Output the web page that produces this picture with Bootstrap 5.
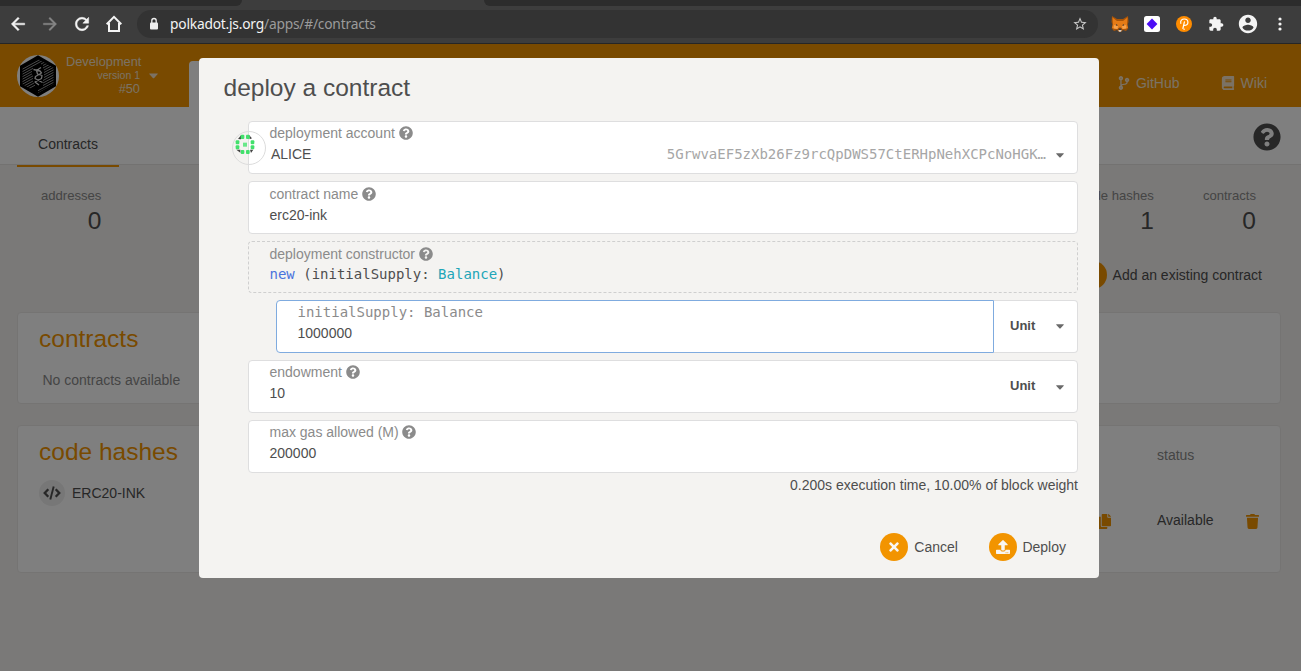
<!DOCTYPE html>
<html lang="en">
<head>
<meta charset="utf-8">
<title>Polkadot/Substrate Portal</title>
<link href="https://cdn.jsdelivr.net/npm/bootstrap@5.3.0/dist/css/bootstrap.min.css" rel="stylesheet">
<style>
  :root { --dot-orange: #f29400; --dot-text: #4e4e4e; }
  body { width: 1301px; height: 671px; font: 14px/20px "Liberation Sans", Arial, sans-serif; color: var(--dot-text); background: #f4f2f0; }
  svg { display: block; flex: none; }
  .mono { font-family: "DejaVu Sans Mono", monospace; }

  /* browser window */
  .tabstrip { height: 6px; background: #3d3d3d; }
  .tabstrip div { background: #2c2c2c; height: 6px; }
  .tabs-before { width: 242px; border-bottom-right-radius: 6px; }
  .tabs-after { width: 817px; border-bottom-left-radius: 6px; }
  .toolbar { height: 38px; padding: 0 5px 1px 2px; background: #3d3d3d; border-bottom: 1px solid #262626; color: #f4f4f4; }
  .tool { width: 32px; height: 36px; display: flex; align-items: center; justify-content: center; }
  .omnibox { height: 28px; margin: 0 6px 0 7px; padding: 0 10px 0 11px; border-radius: 14px; background: #333; font: 13.8px/28px "Noto Sans", sans-serif; letter-spacing: -.22px; }
  .omnibox .path { color: #9b9b9b; }

  /* app behind the dialog */
  .app-header { height: 63px; background: var(--dot-orange); color: #f6e4cb; }
  .chain { width: 189px; padding-left: 17px; }
  .chain-info { width: 74px; margin-left: 7px; font-size: 12.8px; line-height: 13px; white-space: nowrap; margin-top: -1px; }
  .chain-info .ver { font-size: 10.5px; line-height: 14px; }
  .menu-tab { width: 240px; height: 46px; margin-top: 17px; background: #fff; border-radius: 4px 0 0 0; }
  .header-links { padding: 15px 34px 0 0; gap: 41px; }
  .subtabs { height: 58px; background: #fff; border-bottom: 1px solid #e6e4e2; padding: 0 20px 0 17px; }
  .subtab { width: 102px; height: 60px; padding: 27px 0 0 0; border-bottom: 2px solid var(--dot-orange); text-align: center; }
  .stats { height: 67px; padding: 21px 45px 0 41px; }
  .stat { text-align: right; font-size: 13.1px; line-height: 20px; color: #8a8a8a; }
  .stat b { display: block; font-weight: 400; font-size: 24.5px; line-height: 30px; color: var(--dot-text); }
  .page-actions { height: 28px; margin-top: 29px; padding-right: 39px; }
  .round-btn { width: 28px; height: 28px; border-radius: 50%; background: var(--dot-orange); color: #f8f6f3; display: flex; align-items: center; justify-content: center; flex: none; }
  .panel { margin: 0 20px 21px 17px; background: #fff; border: 1px solid #ebe9e7; border-radius: 4px; }
  .panel h1 { font-size: 24.5px; line-height: 30px; color: var(--dot-orange); margin: 0; }
  .panel-contracts { height: 92px; padding: 11px 21px 0; }
  .panel-contracts p { margin: 16px 0 0 3.5px; color: #8a8a8a; }
  .panel-codes { height: 148px; padding: 11px 21px 0; }
  .code-icon { width: 26px; height: 26px; border-radius: 50%; background: #eee; display: flex; align-items: center; justify-content: center; }

  /* dialog */
  .shade { inset: 0; background: rgba(0,0,0,.5); }
  .deploy-dialog { left: 199px; top: 14px; width: 900px; height: 520px; background: #f4f3f1; border: 0; border-radius: 4px; color: var(--dot-text); padding: 15px 21px 0 24px; }
  .deploy-dialog h2 { font-size: 24.5px; line-height: 30px; margin: 0 0 18px .5px; }
  .fields { padding-left: 25px; }
  .field { height: 53px; margin-bottom: 7px; padding: 1px 13px 0 20.5px; background: #fff; border: 1px solid #dededf; border-radius: 4px; position: relative; line-height: 21px; }
  .field-label { color: #8b8b8b; gap: 4px; height: 21px; }
  .field-label svg { margin-bottom: 1px; }
  .field.lower { padding-top: 2px; }
  .field.call { height: 52px; background: transparent; border-style: dashed; border-color: #cfcfcf; padding-top: 2px; line-height: 20px; }
  .field.call .field-label { height: 20px; }
  .field.focused { border-radius: 4px 0 0 4px; border-color: #7fabdf; }
  .unit { font-weight: 700; font-size: 13px; width: 84px; padding: 0 13px 0 16px; }
  .unit-box { height: 53px; background: #fff; border: 1px solid #dededf; border-left: 0; border-radius: 0 4px 4px 0; padding-bottom: 2px; }
  .drop-caret { color: #6a6a6a; margin-top: 2px; }
  .account-icon { left: -17px; top: 9px; width: 34px; height: 34px; border: 1px solid #dcdcdc; border-radius: 50%; padding: 2px; }
  .dialog-actions { margin-top: 38px; padding-right: 12px; gap: 31px; }
</style>
</head>
<body class="d-flex flex-column overflow-hidden m-0">
<svg width="0" height="0" class="position-absolute">
  <symbol id="i-help" viewBox="0 0 512 512"><path fill="currentColor" d="M504 256c0 136.997-111.043 248-248 248S8 392.997 8 256C8 119.083 119.043 8 256 8s248 111.083 248 248zM262.655 90c-54.497 0-89.255 22.957-116.549 63.758-3.536 5.286-2.353 12.415 2.715 16.258l34.699 26.310c5.205 3.947 12.621 3.008 16.665-2.122 17.864-22.658 30.113-35.797 57.303-35.797 20.429 0 45.698 13.148 45.698 32.958 0 14.976-12.363 22.667-32.534 33.976C247.128 238.528 216 254.941 216 296v4c0 6.627 5.373 12 12 12h56c6.627 0 12-5.373 12-12v-1.333c0-28.462 83.186-29.647 83.186-106.667 0-58.002-60.165-102-116.531-102zM256 338c-25.365 0-46 20.635-46 46 0 25.364 20.635 46 46 46s46-20.636 46-46c0-25.365-20.635-46-46-46z"/></symbol>
  <symbol id="i-caret" viewBox="0 0 8 5"><path fill="currentColor" d="M.3.3h7.400Q8 .6 7.600 1L4.400 4.400Q4 4.800 3.600 4.400L.4 1Q0 .6.3.3z"/></symbol>
  <symbol id="i-back" viewBox="0 0 24 24"><path fill="currentColor" d="M20 11H7.830l5.590-5.590L12 4l-8 8 8 8 1.410-1.410L7.830 13H20v-2z"/></symbol>
</svg>

<div class="tabstrip d-flex justify-content-between flex-shrink-0"><div class="tabs-before"></div><div class="tabs-after"></div></div>
<div class="toolbar d-flex align-items-center flex-shrink-0">
  <div class="tool"><svg width="20" height="20" stroke="currentColor" stroke-width=".6"><use href="#i-back"/></svg></div>
  <div class="tool" style="color:#868686"><svg width="20" height="20" transform="scale(-1 1)" stroke="currentColor" stroke-width=".4"><use href="#i-back"/></svg></div>
  <div class="tool"><svg width="20" height="20" viewBox="0 0 24 24"><path fill="currentColor" stroke="currentColor" stroke-width=".6" d="M17.650 6.350C16.200 4.900 14.210 4 12 4c-4.420 0-7.990 3.580-7.990 8s3.570 8 7.990 8c3.730 0 6.840-2.550 7.730-6h-2.080c-.82 2.330-3.040 4-5.650 4-3.310 0-6-2.690-6-6s2.690-6 6-6c1.660 0 3.140.69 4.220 1.780L13 11h7V4l-2.350 2.350z"/></svg></div>
  <div class="tool"><svg width="18" height="18" viewBox="0 0 18 18" fill="none" stroke="currentColor" stroke-width="2"><path d="M4 8v8h10V8M1.700 9.200L9 1.900l7.300 7.300"/></svg></div>
  <div class="omnibox d-flex align-items-center flex-grow-1">
    <svg width="12" height="14" viewBox="0 0 12 14" class="me-2"><rect x="2" y="5.500" width="8" height="7" rx="1" fill="#eee"/><path d="M3.800 6V3.700a2.200 2.200 0 0 1 4.400 0V6" fill="none" stroke="#eee" stroke-width="1.300"/></svg>
    <span class="flex-grow-1" style="margin-left:2px"><span>polkadot.js.org</span><span class="path">/apps/#/contracts</span></span>
    <svg width="16" height="16" viewBox="0 0 24 24"><path fill="#c8c8c8" d="M22 9.240l-7.190-.62L12 2 9.190 8.630 2 9.240l5.460 4.730L5.820 21 12 17.270 18.180 21l-1.630-7.030L22 9.240zM12 15.400l-3.760 2.270 1-4.280-3.320-2.880 4.380-.38L12 6.100l1.710 4.040 4.380.38-3.320 2.880 1 4.280L12 15.400z"/></svg>
  </div>
  <div class="tool"><svg width="18" height="16" viewBox="0 0 18 16"><path fill="#a85408" d="M1 0l5 3h6l5-3 .5 6-1 3 .8 3.500-2.300 2.500-3-1-2 2H8l-2-2-3 1L.7 12.500 1.500 9 .5 6z"/><path fill="#e57b16" d="M1.500 1.500L6 5h6l4.500-3.500L16 8l1 4-5.500 1L9 11l-2.500 2L1 12l1-4z"/><path fill="#f6a14a" d="M3 9l4 1-.5 3-4-.5zM15 9l-4 1 .5 3 4-.5z"/><path fill="#3b3737" d="M5 8l2 1.200-1.800.5zM13 8l-2 1.200 1.800.5zM7.500 12.500h3l-.5 2H8z"/><path fill="#d8cfc6" d="M7.300 14h3.400l-.7 1.800H8z"/></svg></div>
  <div class="tool"><svg width="16" height="16"><rect width="16" height="16" rx="2.500" fill="#fff"/><path d="M8 2.600L13.400 8 8 13.400 2.600 8z" fill="#4b0cf5"/></svg></div>
  <div class="tool"><svg width="16" height="16" viewBox="0 0 16 16"><circle cx="8" cy="8" r="8" fill="#ff8c00"/><path d="M4.800 7.400C4 4.500 6 3 8.300 3c2.300 0 3.600 1.500 3.600 3.200 0 2-1.500 3.200-3.800 3.200M8.400 5.800L6.900 12.500" fill="none" stroke="#fff" stroke-width="1.200" stroke-linecap="round"/><circle cx="8.100" cy="13.300" r=".7" fill="#fff"/></svg></div>
  <div class="tool"><svg width="16" height="16" viewBox="0 0 24 24"><path fill="currentColor" d="M20.500 11H19V7c0-1.100-.9-2-2-2h-4V3.500C13 2.120 11.880 1 10.500 1S8 2.120 8 3.500V5H4c-1.100 0-1.990.9-1.990 2v3.800H3.500c1.490 0 2.700 1.210 2.700 2.700s-1.210 2.700-2.700 2.700H2V20c0 1.100.9 2 2 2h3.800v-1.500c0-1.490 1.210-2.700 2.700-2.700 1.490 0 2.700 1.210 2.700 2.700V22H17c1.100 0 2-.9 2-2v-4h1.500c1.380 0 2.500-1.120 2.500-2.500S21.880 11 20.500 11z"/></svg></div>
  <div class="tool"><svg width="22" height="22" viewBox="0 0 24 24"><path fill="currentColor" d="M12 2C6.480 2 2 6.480 2 12s4.480 10 10 10 10-4.480 10-10S17.520 2 12 2zm0 3c1.660 0 3 1.340 3 3s-1.340 3-3 3-3-1.340-3-3 1.340-3 3-3zm0 14.200c-2.500 0-4.710-1.280-6-3.220.03-1.990 4-3.080 6-3.080 1.990 0 5.970 1.090 6 3.080-1.290 1.940-3.500 3.220-6 3.220z"/></svg></div>
  <div class="tool"><svg width="4" height="14" viewBox="0 0 4 14" fill="currentColor"><circle cx="2" cy="2" r="1.600"/><circle cx="2" cy="7" r="1.600"/><circle cx="2" cy="12" r="1.600"/></svg></div>
</div>

<main class="position-relative flex-grow-1">
  <header class="app-header d-flex">
    <div class="chain d-flex align-items-center">
      <svg width="42" height="42" viewBox="0 0 42 42">
        <defs><clipPath id="hex"><path d="M21 4l15.500 8.700v16.600L21 38 5.500 29.300V12.700z"/></clipPath></defs>
        <circle cx="21" cy="21" r="21" fill="#fff"/><path d="M21 .3l18 10.400v20.600L21 41.700 3 31.300V10.700z" fill="#000"/>
        <g clip-path="url(#hex)" stroke="#bbb" stroke-width=".8"><path d="M3 13L21 3M3 15.500L24 4M3 18L28 4.200M3 20.500L16 13.400M3 23L15 16.400M3 25.500L15 18.900M3 28L16 20.900M3 30.500L16 23.400M6 31.500L16 26M8 33L17 28M11 34L18 30.200M24 9L31 5.200M26 10.500L34 6.200M26 13L38 6.500M27 15L38 9M27 17.500L38 11.500M27 20L38 14M27 22.500L38 16.500M26 25.500L38 19M26 28L38 21.500M26 30.500L38 24M21 35.700L38 26.500M21 38.200L38 29"/></g>
        <path d="M16.500 14.500l6.500 1.500 1.500 2-6 3.500-.5 2 7.500 4M24 12.500l-4.500 3 1 3.500 4.500 1.500-.5 3-6.500 3.500 4 3" fill="none" stroke="#e4e4e4" stroke-width="1.300" stroke-linejoin="round"/>
      </svg>
      <div class="chain-info text-end"><div>Development</div><div class="ver">version 1</div><div>#50</div></div>
      <svg width="9" height="6" style="margin:1px 0 0 9px"><use href="#i-caret"/></svg>
    </div>
    <div class="menu-tab"></div>
    <nav class="header-links d-flex ms-auto align-items-center">
      <span class="d-flex align-items-center" style="gap:6px"><svg width="12" height="14" viewBox="0 0 384 512"><path fill="currentColor" d="M384 144c0-44.200-35.800-80-80-80s-80 35.800-80 80c0 36.400 24.300 67.100 57.500 76.800-.6 16.100-4.200 28.500-11 36.900-15.400 19.200-49.300 22.400-85.200 25.700-28.200 2.600-57.400 5.400-81.300 16.900v-144c32.500-10.200 56-40.500 56-76.300 0-44.200-35.800-80-80-80S0 35.800 0 80c0 35.800 23.500 66.100 56 76.300v199.300C23.500 365.900 0 396.200 0 432c0 44.200 35.800 80 80 80s80-35.800 80-80c0-34-21.200-63.100-51.200-74.600 3.100-5.200 7.800-9.800 14.900-13.400 16.200-8.200 40.400-10.400 66.100-12.800 42.200-3.900 90-8.400 118.200-43.400 14-17.400 21.100-39.800 21.600-67.900 31.600-10.800 54.400-40.700 54.400-75.900zM80 64c8.800 0 16 7.200 16 16s-7.200 16-16 16-16-7.200-16-16 7.200-16 16-16zm0 384c-8.800 0-16-7.200-16-16s7.200-16 16-16 16 7.200 16 16-7.200 16-16 16zm224-320c8.800 0 16 7.200 16 16s-7.200 16-16 16-16-7.200-16-16 7.200-16 16-16z"/></svg>GitHub</span>
      <span class="d-flex align-items-center" style="gap:6px"><svg width="14" height="14" viewBox="0 0 448 512"><path fill="currentColor" d="M448 360V24c0-13.300-10.700-24-24-24H96C43 0 0 43 0 96v320c0 53 43 96 96 96h328c13.300 0 24-10.700 24-24v-16c0-7.500-3.500-14.300-8.900-18.700-4.200-15.400-4.200-59.300 0-74.700 5.400-4.300 8.900-11.100 8.900-18.600zM128 134c0-3.300 2.700-6 6-6h212c3.300 0 6 2.700 6 6v20c0 3.300-2.700 6-6 6H134c-3.300 0-6-2.700-6-6v-20zm0 64c0-3.300 2.700-6 6-6h212c3.300 0 6 2.700 6 6v20c0 3.300-2.700 6-6 6H134c-3.300 0-6-2.700-6-6v-20zm253.400 250H96c-17.700 0-32-14.300-32-32 0-17.600 14.400-32 32-32h285.400c-1.900 17.100-1.900 46.900 0 64z"/></svg>Wiki</span>
    </nav>
  </header>
  <div class="subtabs d-flex justify-content-between align-items-start">
    <div class="subtab">Contracts</div>
    <svg width="28" height="28" style="margin-top:16px"><use href="#i-help"/></svg>
  </div>
  <section class="stats d-flex">
    <div class="stat">addresses<b>0</b></div>
    <div class="stat ms-auto">code hashes<b>1</b></div>
    <div class="stat" style="margin-left:49px">contracts<b>0</b></div>
  </section>
  <div class="page-actions d-flex justify-content-end align-items-center"><span class="round-btn me-2"></span><span style="margin-left:-2px">Add an existing contract</span></div>
  <section class="panel panel-contracts" style="margin-top:23px">
    <h1>contracts</h1>
    <p>No contracts available</p>
  </section>
  <section class="panel panel-codes d-flex">
    <div class="flex-grow-1">
      <h1>code hashes</h1>
      <div class="d-flex align-items-center" style="margin-top:13px">
        <span class="code-icon"><svg width="18" height="14" viewBox="0 0 18 14" fill="none" stroke="currentColor" stroke-width="2.300"><path d="M5.300 3.200L1.700 7l3.600 3.800M12.700 3.200L16.300 7l-3.600 3.800"/><path d="M10.700.5L7.300 13.500" stroke-width="1.900"/></svg></span>
        <span style="margin-left:7px">ERC20-INK</span>
      </div>
    </div>
    <div class="d-flex align-items-center" style="height:168px;width:59px;color:var(--dot-orange)"><svg width="13" height="15" viewBox="0 0 448 512"><path fill="currentColor" d="M320 448v40c0 13.255-10.745 24-24 24H24c-13.255 0-24-10.745-24-24V120c0-13.255 10.745-24 24-24h72v296c0 30.879 25.121 56 56 56h168zm0-344V0H152c-13.255 0-24 10.745-24 24v368c0 13.255 10.745 24 24 24h272c13.255 0 24-10.745 24-24V128H344c-13.200 0-24-10.800-24-24zm120.971-31.029L375.029 7.029A24 24 0 0 0 358.059 0H352v96h96v-6.059a24 24 0 0 0-7.029-16.970z"/></svg></div>
    <div style="width:89px;padding-top:8px"><div style="color:#8a8a8a">status</div><div style="margin-top:45px">Available</div></div>
    <div class="d-flex align-items-center" style="height:168px;width:13px;color:var(--dot-orange)"><svg width="13" height="15" viewBox="0 0 448 512"><path fill="currentColor" d="M432 32H312l-9.400-18.700A24 24 0 0 0 281.100 0H166.800a23.720 23.720 0 0 0-21.400 13.300L136 32H16A16 16 0 0 0 0 48v32a16 16 0 0 0 16 16h416a16 16 0 0 0 16-16V48a16 16 0 0 0-16-16zM53.200 467a48 48 0 0 0 47.900 45h245.800a48 48 0 0 0 47.900-45L416 128H32z"/></svg></div>
  </section>

  <div class="shade position-absolute"></div>

  <div class="deploy-dialog modal-content position-absolute" role="dialog">
    <h2>deploy a contract</h2>
    <div class="fields">
      <div class="field">
        <div class="account-icon position-absolute">
          <svg width="20" height="20" viewBox="0 0 60 60"><path fill="#444" d="M9 15L18 4v12zM42 3l9 10-7 3zM4 47h12v9zM45 47h10l-7 10z"/><g fill="#42e06c"><rect x="17" y="2" width="11" height="13" rx="3"/><rect x="33" y="2" width="11" height="13" rx="3"/><rect x="17" y="48" width="11" height="12" rx="3"/><rect x="33" y="48" width="11" height="12" rx="3"/><rect x="2" y="19" width="11" height="12" rx="3"/><rect x="2" y="34" width="11" height="12" rx="3"/><rect x="47" y="19" width="11" height="12" rx="3"/><rect x="47" y="34" width="11" height="12" rx="3"/></g><rect x="24" y="26" width="12" height="12" fill="#68e88a"/></svg>
        </div>
        <div class="field-label d-flex align-items-center">deployment account<svg width="14" height="14"><use href="#i-help"/></svg></div>
        <div class="d-flex align-items-center"><span style="margin-left:1.500px">ALICE</span><span class="mono ms-auto" style="color:#a6a6a6;margin-top:-1px">5GrwvaEF5zXb26Fz9rcQpDWS57CtERHpNehXCPcNoHGK…</span><svg width="8" height="5" class="drop-caret" style="margin-left:10px"><use href="#i-caret"/></svg></div>
      </div>
      <div class="field lower">
        <div class="field-label d-flex align-items-center">contract name<svg width="14" height="14" style="margin-bottom:2px"><use href="#i-help"/></svg></div>
        <div>erc20-ink</div>
      </div>
      <div class="field call">
        <div class="field-label d-flex align-items-center">deployment constructor<svg width="14" height="14"><use href="#i-help"/></svg></div>
        <div class="mono"><span style="color:#4a73dd">new</span> (initialSupply: <span style="color:#21a6b8">Balance</span>)</div>
      </div>
      <div class="d-flex" style="padding-left:28px">
        <div class="field focused flex-grow-1">
          <div class="field-label mono">initialSupply: Balance</div>
          <div>1000000</div>
        </div>
        <div class="unit unit-box d-flex align-items-center justify-content-between">Unit<svg width="8" height="5" class="drop-caret"><use href="#i-caret"/></svg></div>
      </div>
      <div class="field d-flex pe-0">
        <div class="flex-grow-1">
          <div class="field-label d-flex align-items-center">endowment<svg width="14" height="14"><use href="#i-help"/></svg></div>
          <div>10</div>
        </div>
        <div class="unit d-flex align-items-center justify-content-between pb-1" style="width:83px"><span>Unit</span><svg width="8" height="5" class="drop-caret" style="margin-top:4px"><use href="#i-caret"/></svg></div>
      </div>
      <div class="field">
        <div class="field-label d-flex align-items-center" style="gap:3px">max gas allowed (M)<svg width="14" height="14"><use href="#i-help"/></svg></div>
        <div>200000</div>
      </div>
      <div class="text-end" style="margin-top:-5px">0.200s execution time, 10.00% of block weight</div>
    </div>
    <div class="dialog-actions d-flex justify-content-end">
      <span class="d-flex align-items-center" style="gap:6px"><span class="round-btn"><svg width="10" height="14" viewBox="0 0 352 512"><path fill="currentColor" d="M242.720 256l100.070-100.070c12.280-12.280 12.280-32.190 0-44.480l-22.240-22.240c-12.280-12.280-32.190-12.280-44.480 0L176 189.280 75.930 89.210c-12.280-12.280-32.190-12.280-44.480 0L9.210 111.450c-12.280 12.280-12.280 32.190 0 44.480L109.280 256 9.210 356.070c-12.280 12.280-12.280 32.190 0 44.480l22.240 22.240c12.280 12.280 32.200 12.280 44.480 0L176 322.720l100.070 100.070c12.280 12.280 32.200 12.280 44.480 0l22.240-22.240c12.280-12.280 12.280-32.190 0-44.480L242.720 256z"/></svg></span>Cancel</span>
      <span class="d-flex align-items-center" style="gap:5.500px"><span class="round-btn"><svg width="14" height="14" viewBox="0 0 512 512"><path fill="currentColor" d="M296 384h-80c-13.300 0-24-10.700-24-24V192h-87.700c-17.800 0-26.700-21.500-14.100-34.100L242.300 5.700c7.500-7.500 19.800-7.500 27.300 0l152.200 152.200c12.600 12.600 3.700 34.100-14.100 34.100H320v168c0 13.300-10.700 24-24 24zm216-8v112c0 13.300-10.700 24-24 24H24c-13.300 0-24-10.700-24-24V376c0-13.300 10.700-24 24-24h136v8c0 30.900 25.100 56 56 56h80c30.900 0 56-25.100 56-56v-8h136c13.300 0 24 10.700 24 24zm-124 88c0-11-9-20-20-20s-20 9-20 20 9 20 20 20 20-9 20-20zm64 0c0-11-9-20-20-20s-20 9-20 20 9 20 20 20 20-9 20-20z"/></svg></span>Deploy</span>
    </div>
  </div>
</main>
<script src="https://cdn.jsdelivr.net/npm/bootstrap@5.3.0/dist/js/bootstrap.bundle.min.js"></script>
</body>
</html>
